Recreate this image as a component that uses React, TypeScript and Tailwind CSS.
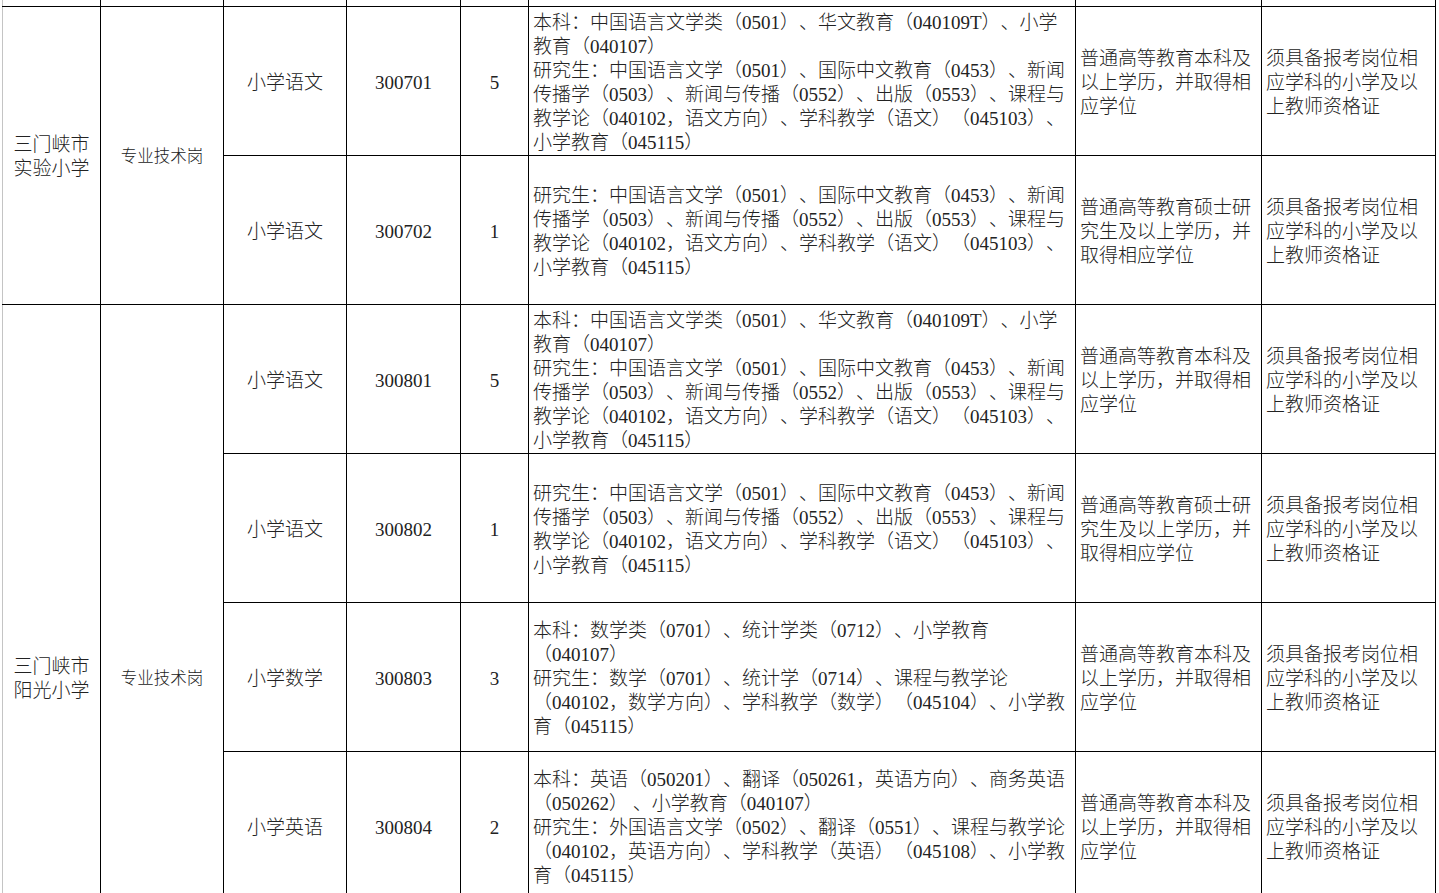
import React from "react";

type Row = {
  subject: string;
  code: string;
  count: string;
  major: string[];
  edu: string[];
};

const OTHER = ["须具备报考岗位相", "应学科的小学及以", "上教师资格证"];
const EDU_BK = ["普通高等教育本科及", "以上学历，并取得相", "应学位"];
const EDU_SS = ["普通高等教育硕士研", "究生及以上学历，并", "取得相应学位"];

const CHINESE_BK = [
  "本科：中国语言文学类（0501）、华文教育（040109T）、小学",
  "教育（040107）",
  "研究生：中国语言文学（0501）、国际中文教育（0453）、新闻",
  "传播学（0503）、新闻与传播（0552）、出版（0553）、课程与",
  "教学论（040102，语文方向）、学科教学（语文）（045103）、",
  "小学教育（045115）",
];
const CHINESE_SS = CHINESE_BK.slice(2);

const groups: { school: string[]; rows: Row[]; extra?: boolean }[] = [
  {
    school: ["三门峡市", "实验小学"],
    rows: [
      { subject: "小学语文", code: "300701", count: "5", major: CHINESE_BK, edu: EDU_BK },
      { subject: "小学语文", code: "300702", count: "1", major: CHINESE_SS, edu: EDU_SS },
    ],
  },
  {
    school: ["三门峡市", "阳光小学"],
    extra: true,
    rows: [
      { subject: "小学语文", code: "300801", count: "5", major: CHINESE_BK, edu: EDU_BK },
      { subject: "小学语文", code: "300802", count: "1", major: CHINESE_SS, edu: EDU_SS },
      {
        subject: "小学数学",
        code: "300803",
        count: "3",
        major: [
          "本科：数学类（0701）、统计学类（0712）、小学教育",
          "（040107）",
          "研究生：数学（0701）、统计学（0714）、课程与教学论",
          "（040102，数学方向）、学科教学（数学）（045104）、小学教",
          "育（045115）",
        ],
        edu: EDU_BK,
      },
      {
        subject: "小学英语",
        code: "300804",
        count: "2",
        major: [
          "本科：英语（050201）、翻译（050261，英语方向）、商务英语",
          "（050262） 、小学教育（040107）",
          "研究生：外国语言文学（0502）、翻译（0551）、课程与教学论",
          "（040102，英语方向）、学科教学（英语）（045108）、小学教",
          "育（045115）",
        ],
        edu: EDU_BK,
      },
    ],
  },
];

const edge = "border border-black p-0 align-middle";
const td = "border border-black p-0 pt-[4px] align-middle";
const first = "border border-black border-l-[#c4c4c4] p-0 pt-[4px] align-middle";

const Lines: React.FC<{ lines: string[] }> = ({ lines }) => (
  <div className="px-[4px]">
    {lines.map((l, i) => (
      <div key={i} className="whitespace-pre">
        {l}
      </div>
    ))}
  </div>
);

export default function App() {
  return (
    <div className="h-[893px] w-full overflow-hidden bg-white">
      <table
        className="ml-[2px] w-[1433px] table-fixed border-collapse text-[19px] font-light leading-[24px] text-[#222] [text-spacing-trim:space-all]"
        style={{ fontFamily: '"Liberation Serif", "Noto Sans CJK SC", serif' }}
      >
        <colgroup>
          <col className="w-[98px]" />
          <col className="w-[123px]" />
          <col className="w-[123px]" />
          <col className="w-[114px]" />
          <col className="w-[68px]" />
          <col className="w-[547px]" />
          <col className="w-[186px]" />
          <col className="w-[174px]" />
        </colgroup>
        <tbody>
          <tr className="h-[6px]">
            <td className={`${edge} border-t-0 border-l-[#c4c4c4]`} />
            <td className={`${edge} border-t-0`} />
            <td className={`${edge} border-t-0`} />
            <td className={`${edge} border-t-0`} />
            <td className={`${edge} border-t-0`} />
            <td className={`${edge} border-t-0`} />
            <td className={`${edge} border-t-0`} />
            <td className={`${edge} border-t-0`} />
          </tr>
          {groups.map((g, gi) =>
            [
              ...g.rows.map((r, ri) => (
                <tr key={`${gi}-${ri}`} className="h-[149px]">
                  {ri === 0 && (
                    <>
                      <td rowSpan={g.rows.length + (g.extra ? 1 : 0)} className={`${first} text-center`}>
                        {g.school.map((s) => (
                          <div key={s}>{s}</div>
                        ))}
                      </td>
                      <td
                        rowSpan={g.rows.length + (g.extra ? 1 : 0)}
                        className={`${td} text-center text-[16.5px]`}
                      >
                        专业技术岗
                      </td>
                    </>
                  )}
                  <td className={`${td} text-center`}>{r.subject}</td>
                  <td className={`${td} text-center`}>{r.code}</td>
                  <td className={`${td} text-center`}>{r.count}</td>
                  <td className={td}>
                    <Lines lines={r.major} />
                  </td>
                  <td className={td}>
                    <Lines lines={r.edu} />
                  </td>
                  <td className={td}>
                    <Lines lines={OTHER} />
                  </td>
                </tr>
              )),
              g.extra ? (
                <tr key={`${gi}-extra`} className="h-[149px]">
                  <td className={td} />
                  <td className={td} />
                  <td className={td} />
                  <td className={td} />
                  <td className={td} />
                  <td className={td} />
                </tr>
              ) : null,
            ]
          )}
        </tbody>
      </table>
    </div>
  );
}
